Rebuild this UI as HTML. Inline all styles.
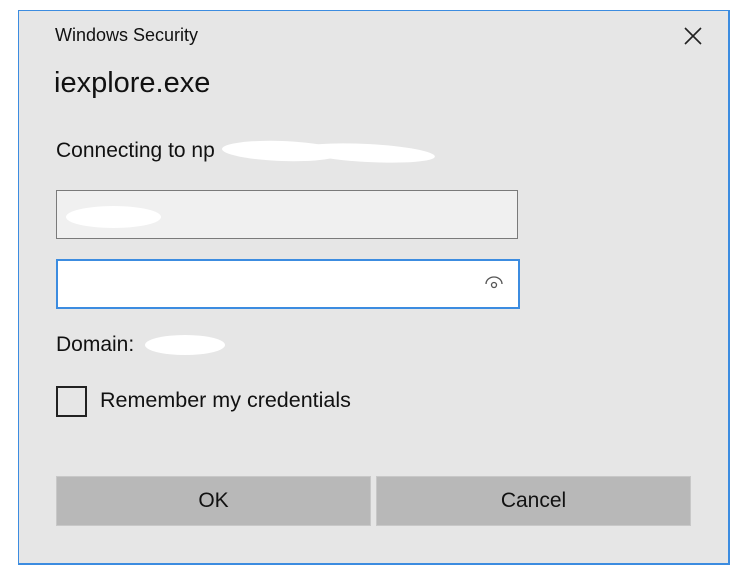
<!DOCTYPE html>
<html><head><style>
body{margin:0;width:755px;height:581px;background:#fff;position:relative;font-family:"Liberation Sans",sans-serif;color:#111;overflow:hidden}
.d{position:absolute;left:18px;top:10px;width:709px;height:552px;background:#e6e6e6;border:2px solid #3c8ce0;border-top-width:1px;border-left-width:1px}
.t{position:absolute;white-space:nowrap}
.btn{position:absolute;top:476px;height:48px;background:#b8b8b8;border:1px solid #c8c8c8;font-size:21px;text-align:center;line-height:48px;color:#111}
.blob{position:absolute;background:#fff;border-radius:50%}
</style></head><body>
<div class="d"></div>
<div class="t" style="left:55px;top:25px;font-size:18px">Windows Security</div>
<svg style="position:absolute;left:684px;top:27px" width="18" height="18"><path d="M1 1L17 17M17 1L1 17" stroke="#222" stroke-width="1.6"/></svg>
<div class="t" style="left:54px;top:67px;font-size:29px">iexplore.exe</div>
<div class="t" style="left:56px;top:139px;font-size:21px">Connecting to np</div>
<div class="blob" style="left:222px;top:141px;width:120px;height:20px;transform:rotate(2deg)"></div>
<div class="blob" style="left:300px;top:144px;width:135px;height:18px;transform:rotate(3deg)"></div>
<div style="position:absolute;left:56px;top:190px;width:460px;height:47px;background:#f0f0f0;border:1px solid #7a7a7a"></div>
<div class="blob" style="left:66px;top:206px;width:95px;height:22px"></div>
<div style="position:absolute;left:56px;top:259px;width:460px;height:46px;background:#fff;border:2px solid #3c8ce0"></div>
<svg style="position:absolute;left:484px;top:276px" width="20" height="14"><path d="M2 8A8 7 0 0 1 18 8" stroke="#555" stroke-width="1.3" fill="none"/><circle cx="10" cy="9" r="2.5" stroke="#555" stroke-width="1.3" fill="none"/></svg>
<div class="t" style="left:56px;top:333px;font-size:21px">Domain: </div>
<div class="blob" style="left:145px;top:335px;width:80px;height:20px"></div>
<div style="position:absolute;left:56px;top:386px;width:27px;height:27px;border:2px solid #222"></div>
<div class="t" style="left:100px;top:388px;font-size:21.5px">Remember my credentials</div>
<div class="btn" style="left:56px;width:313px">OK</div>
<div class="btn" style="left:376px;width:313px">Cancel</div>
</body></html>
